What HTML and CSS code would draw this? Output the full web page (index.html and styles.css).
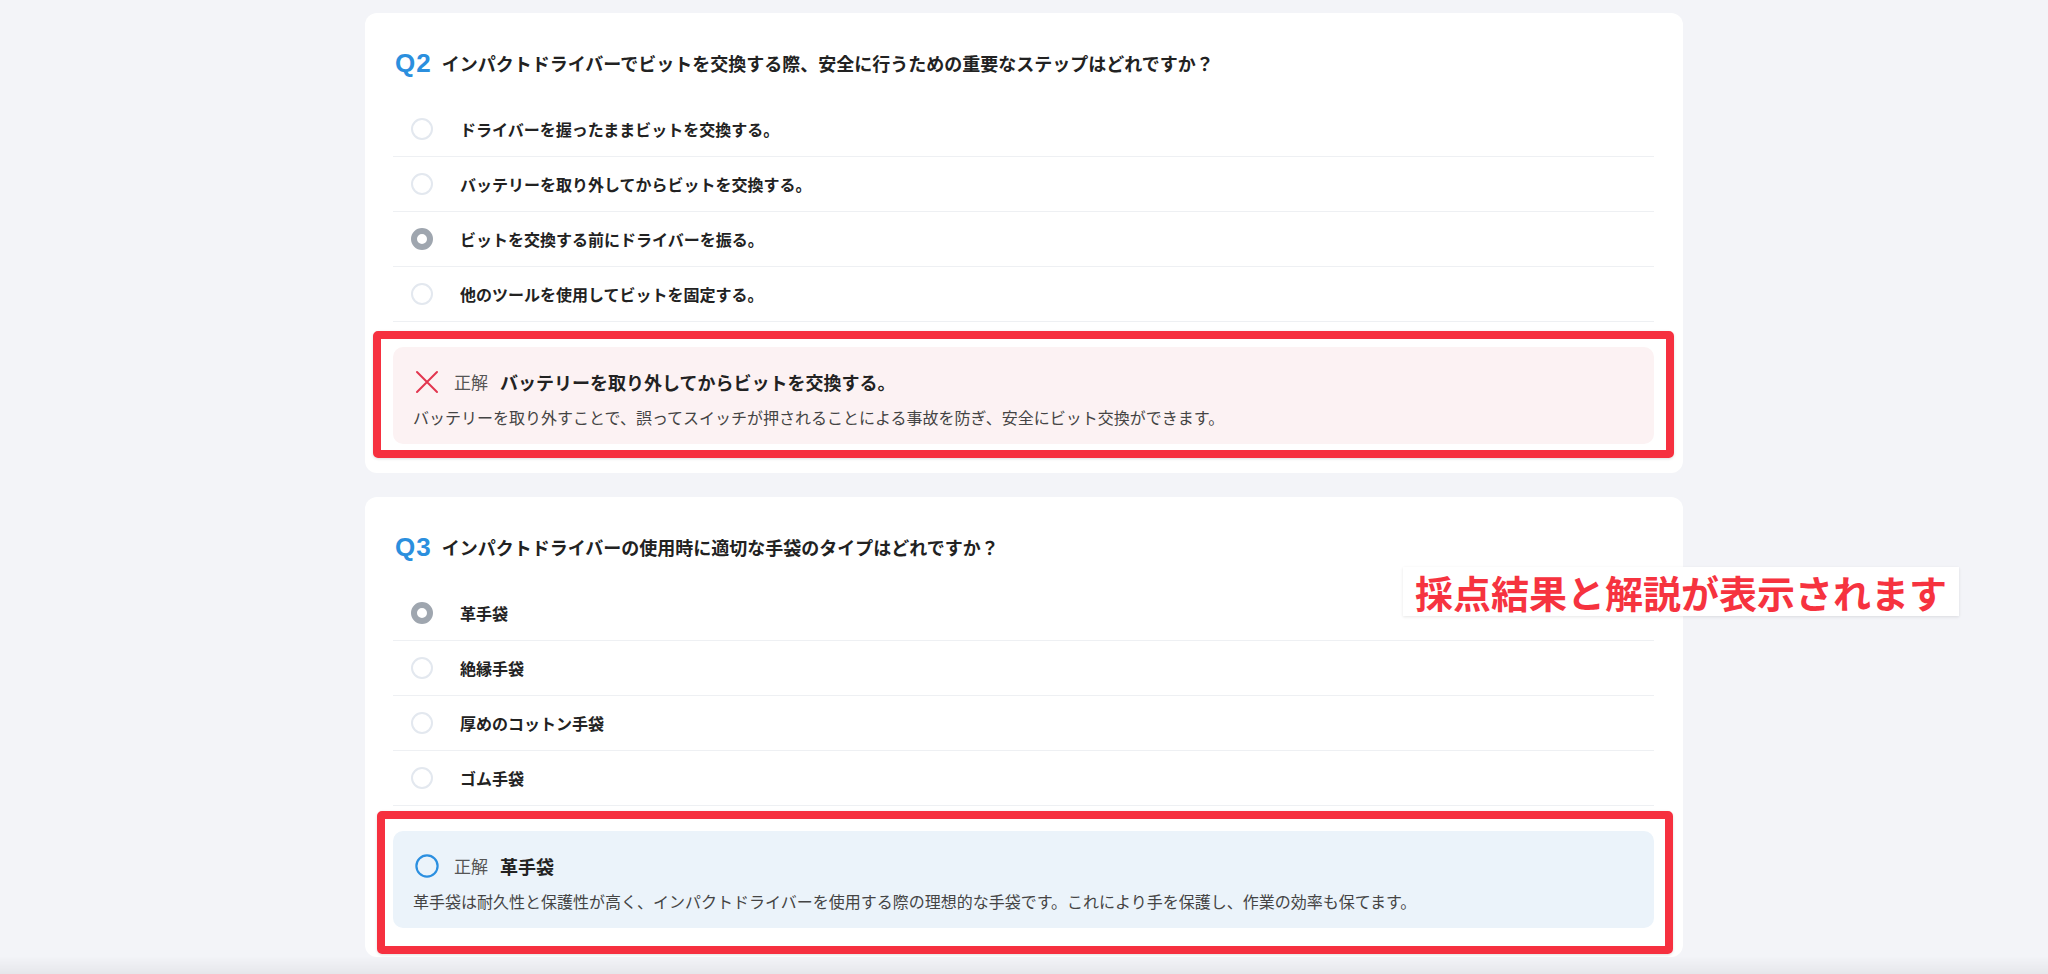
FILE: index.html
```html
<!DOCTYPE html>
<html lang="ja">
<head>
<meta charset="utf-8">
<title>クイズ結果</title>
<link rel="stylesheet" href="styles.css">
</head>
<body>
<main class="page">
  <section class="card">
    <h2 class="q-head"><span class="q-num">Q2</span><span class="q-text">インパクトドライバーでビットを交換する際、安全に行うための重要なステップはどれですか？</span></h2>
    <ul class="options">
      <li class="option"><span class="radio"></span><span class="opt-text">ドライバーを握ったままビットを交換する。</span></li>
      <li class="option"><span class="radio"></span><span class="opt-text">バッテリーを取り外してからビットを交換する。</span></li>
      <li class="option"><span class="radio radio--checked"></span><span class="opt-text">ビットを交換する前にドライバーを振る。</span></li>
      <li class="option"><span class="radio"></span><span class="opt-text">他のツールを使用してビットを固定する。</span></li>
    </ul>
    <div class="feedback feedback--wrong">
      <div class="fb-head">
        <svg class="fb-icon" viewBox="0 0 24 24" aria-hidden="true"><path d="M2 2 L22 22 M22 2 L2 22" fill="none" stroke="#e2364f" stroke-width="2" stroke-linecap="round"/></svg>
        <span class="fb-label">正解</span>
        <span class="fb-answer">バッテリーを取り外してからビットを交換する。</span>
      </div>
      <p class="fb-text">バッテリーを取り外すことで、誤ってスイッチが押されることによる事故を防ぎ、安全にビット交換ができます。</p>
      <div class="mark mark--first"></div>
    </div>
  </section>

  <section class="card">
    <h2 class="q-head"><span class="q-num">Q3</span><span class="q-text">インパクトドライバーの使用時に適切な手袋のタイプはどれですか？</span></h2>
    <ul class="options">
      <li class="option"><span class="radio radio--checked"></span><span class="opt-text">革手袋</span></li>
      <li class="option"><span class="radio"></span><span class="opt-text">絶縁手袋</span></li>
      <li class="option"><span class="radio"></span><span class="opt-text">厚めのコットン手袋</span></li>
      <li class="option"><span class="radio"></span><span class="opt-text">ゴム手袋</span></li>
    </ul>
    <div class="feedback feedback--right">
      <div class="fb-head">
        <svg class="fb-icon" viewBox="0 0 24 24" aria-hidden="true"><circle cx="12" cy="12" r="10.6" fill="none" stroke="#2b8fe0" stroke-width="2.2"/></svg>
        <span class="fb-label">正解</span>
        <span class="fb-answer">革手袋</span>
      </div>
      <p class="fb-text">革手袋は耐久性と保護性が高く、インパクトドライバーを使用する際の理想的な手袋です。これにより手を保護し、作業の効率も保てます。</p>
      <div class="mark mark--second"></div>
    </div>
  </section>

  <div class="callout">採点結果と解説が表示されます</div>
</main>
</body>
</html>
```

FILE: styles.css
```css
html, body {
  margin: 0;
  padding: 0;
}

body {
  background: #f3f4f8;
  font-family: "Noto Sans CJK JP", "Noto Sans", sans-serif;
  color: #222;
  overflow: hidden;
  height: 974px;
}

body::after {
  content: "";
  position: fixed;
  left: 0;
  right: 0;
  bottom: 0;
  height: 18px;
  background: linear-gradient(to bottom, rgba(0, 0, 0, 0), rgba(0, 0, 0, 0.05));
  pointer-events: none;
}

.page {
  position: relative;
  display: flex;
  flex-direction: column;
  align-items: center;
  gap: 24px;
  padding-top: 13px;
}

.card {
  box-sizing: border-box;
  width: 1318px;
  background: #fff;
  border-radius: 12px;
  padding: 36px 29px 29px 28px;
}

.q-head {
  display: flex;
  align-items: center;
  gap: 10px;
  margin: 0;
  padding-left: 2px;
  height: 28px;
}

.q-num {
  font-family: "Liberation Sans", Arial, sans-serif;
  font-weight: 700;
  font-size: 26px;
  letter-spacing: 1px;
  line-height: 28px;
  color: #2b8fde;
}

.q-text {
  font-size: 18px;
  font-weight: 700;
  line-height: 28px;
  color: #222;
}

.options {
  list-style: none;
  margin: 25px 0 0;
  padding: 0;
}

.option {
  display: flex;
  align-items: center;
  gap: 27px;
  height: 54px;
  padding-left: 18px;
  border-bottom: 1px solid #eef0f3;
}

.radio {
  box-sizing: border-box;
  width: 22px;
  height: 22px;
  border-radius: 50%;
  border: 2px solid #e3e8ef;
  background: #fff;
  flex: none;
}

.radio--checked {
  border: 6px solid #9fa6af;
}

.opt-text {
  font-size: 16px;
  font-weight: 700;
  color: #222;
}

.feedback {
  position: relative;
  margin-top: 25px;
  border-radius: 10px;
  padding: 24px 20px 15px;
}

.feedback--wrong {
  background: #fcf2f3;
}

.feedback--right {
  background: #ebf3fa;
}

.fb-head {
  display: flex;
  align-items: center;
  height: 22px;
}

.fb-icon {
  width: 24px;
  height: 24px;
  margin-left: 2px;
  flex: none;
}

.fb-label {
  margin-left: 15px;
  font-size: 17px;
  color: #555;
  line-height: 22px;
}

.fb-answer {
  margin-left: 12px;
  font-size: 18px;
  font-weight: 700;
  color: #222;
  line-height: 22px;
}

.fb-text {
  margin: 12px 0 0;
  font-size: 16px;
  line-height: 24px;
  color: #444;
}

.mark {
  position: absolute;
  border: 8px solid #f6303f;
  border-radius: 5px;
  box-shadow: 0 1px 3px rgba(0, 0, 0, 0.12);
  pointer-events: none;
}

.mark--first {
  top: -16px;
  left: -20px;
  right: -20px;
  bottom: -14px;
}

.mark--second {
  top: -20px;
  left: -16px;
  right: -19px;
  bottom: -26px;
}

.callout {
  position: absolute;
  top: 567px;
  left: 1403px;
  padding: 0 12px;
  height: 49px;
  line-height: 49px;
  background: #fff;
  color: #f6333f;
  font-size: 38px;
  font-weight: 700;
  white-space: nowrap;
  box-shadow: 0 1px 3px rgba(0, 0, 0, 0.1);
}
```
